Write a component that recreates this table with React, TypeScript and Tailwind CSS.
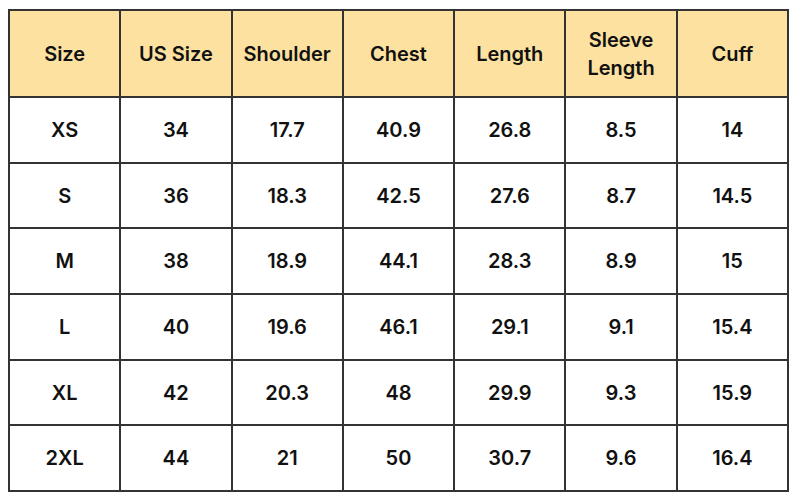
const headers = ["Size", "US Size", "Shoulder", "Chest", "Length", "Sleeve Length", "Cuff"];

const rows = [
  ["XS", "34", "17.7", "40.9", "26.8", "8.5", "14"],
  ["S", "36", "18.3", "42.5", "27.6", "8.7", "14.5"],
  ["M", "38", "18.9", "44.1", "28.3", "8.9", "15"],
  ["L", "40", "19.6", "46.1", "29.1", "9.1", "15.4"],
  ["XL", "42", "20.3", "48", "29.9", "9.3", "15.9"],
  ["2XL", "44", "21", "50", "30.7", "9.6", "16.4"],
];

export default function App() {
  return (
    <div className="w-[800px] h-[500px] bg-white pt-[9px] pl-[8px] font-['Inter',sans-serif] text-[#111]">
      <table className="w-[781px] table-fixed border-collapse border-2 border-[#333]">
        <thead>
          <tr className="h-[87px] bg-[#fde1a0]">
            {headers.map((h) => (
              <th
                key={h}
                className="border-2 border-[#333] px-1 text-center text-[20px] font-semibold leading-[28px]"
              >
                {h === "Sleeve Length" ? (
                  <>
                    Sleeve
                    <br />
                    Length
                  </>
                ) : (
                  h
                )}
              </th>
            ))}
          </tr>
        </thead>
        <tbody>
          {rows.map((r) => (
            <tr key={r[0]} className="h-[65.7px]">
              {r.map((c, i) => (
                <td
                  key={i}
                  className="border-2 border-[#333] text-center text-[20px] font-semibold"
                >
                  {c}
                </td>
              ))}
            </tr>
          ))}
        </tbody>
      </table>
    </div>
  );
}
